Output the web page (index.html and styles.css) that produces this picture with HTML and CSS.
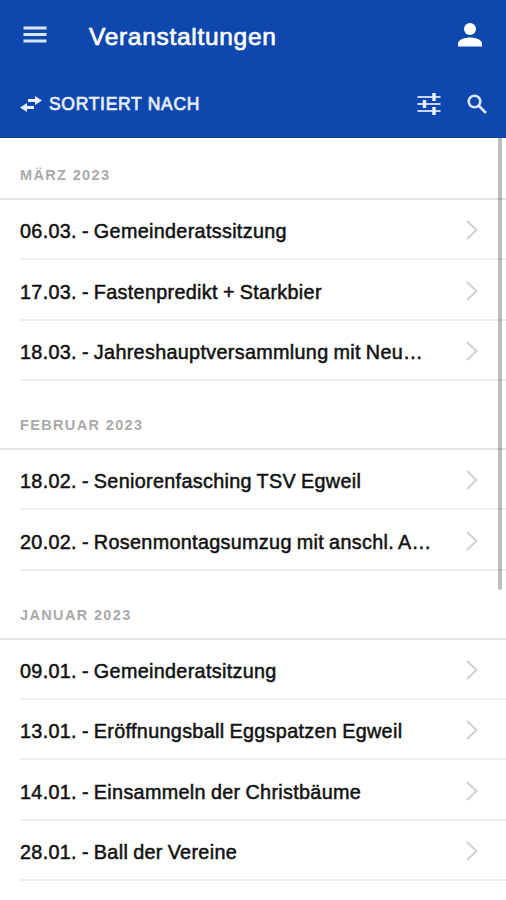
FILE: index.html
```html
<!DOCTYPE html>
<html lang="de">
<head>
    <meta charset="UTF-8">
    <meta name="viewport" content="width=device-width, initial-scale=1.0">
    <title>Veranstaltungen</title>
    <link rel="stylesheet" href="styles.css">
</head>
<body>
    <!-- Header -->
    <header>
        <div class="titlebar">
            <svg class="menu-icon" viewBox="0 0 24 18"><path d="M0.500 2h23M0.500 8.500h23M0.500 15h23"/></svg>
            <h1>Veranstaltungen</h1>
            <svg class="user-icon" viewBox="0 0 24 24"><circle cx="12" cy="6" r="6"/><path d="M0 23.500v-3c0-4 7-6 12-6s12 2 12 6v3z"/></svg>
        </div>
        <div class="toolbar">
            <svg class="swap-icon" viewBox="0 0 22 16"><path d="M8 3h7V0l7 4.500L15 9V6H8zM14 10H7V7L0 11.500 7 16v-3h7z"/></svg>
            <span class="sort-label">SORTIERT NACH</span>
            <svg class="filter-icon" viewBox="0 0 24 22"><path class="track" d="M0.500 4h23M0.500 11h23M0.500 18h23"/><path class="knob" d="M17 0v8M7.500 7v8M17 14v8"/></svg>
            <svg class="search-icon" viewBox="0 0 20 20"><circle cx="7.500" cy="7.500" r="5.800"/><path d="M11.500 11.500l7.500 7.500"/></svg>
        </div>
    </header>

    <!-- Events -->
    <main>
        <section>
            <h2>MÄRZ 2023</h2>
            <ul>
                <li><span>06.03. - Gemeinderatssitzung</span><svg viewBox="0 0 12 20"><path d="M1 1l9.500 9L1 19"/></svg></li>
                <li><span>17.03. - Fastenpredikt + Starkbier</span><svg viewBox="0 0 12 20"><path d="M1 1l9.500 9L1 19"/></svg></li>
                <li><span>18.03. - Jahreshauptversammlung mit Neu…</span><svg viewBox="0 0 12 20"><path d="M1 1l9.500 9L1 19"/></svg></li>
            </ul>
        </section>
        <section>
            <h2>FEBRUAR 2023</h2>
            <ul>
                <li><span>18.02. - Seniorenfasching TSV Egweil</span><svg viewBox="0 0 12 20"><path d="M1 1l9.500 9L1 19"/></svg></li>
                <li><span>20.02. - Rosenmontagsumzug mit anschl. A…</span><svg viewBox="0 0 12 20"><path d="M1 1l9.500 9L1 19"/></svg></li>
            </ul>
        </section>
        <section>
            <h2>JANUAR 2023</h2>
            <ul>
                <li><span>09.01. - Gemeinderatsitzung</span><svg viewBox="0 0 12 20"><path d="M1 1l9.500 9L1 19"/></svg></li>
                <li><span>13.01. - Eröffnungsball Eggspatzen Egweil</span><svg viewBox="0 0 12 20"><path d="M1 1l9.500 9L1 19"/></svg></li>
                <li><span>14.01. - Einsammeln der Christbäume</span><svg viewBox="0 0 12 20"><path d="M1 1l9.500 9L1 19"/></svg></li>
                <li><span>28.01. - Ball der Vereine</span><svg viewBox="0 0 12 20"><path d="M1 1l9.500 9L1 19"/></svg></li>
            </ul>
        </section>
        <div class="scrollbar"></div>
    </main>
</body>
</html>
```
FILE: styles.css
```css
* {
    box-sizing: border-box;
}

body {
    margin: 0;
    height: 900px;
    overflow: hidden;
    background: #fff;
    color: #111;
    font-family: "Liberation Sans", Arial, sans-serif;
}

/* Header */
header {
    height: 138px;
    background: #0e47ad;
    border-bottom: 1px solid #0a3c9e;
    color: #fff;
}

.titlebar {
    display: flex;
    align-items: center;
    height: 70px;
    padding: 0 24px 0 23px;
}

.menu-icon {
    width: 24px;
    height: 18px;
    stroke: #dbe6fb;
    stroke-width: 2.8;
}

h1 {
    flex: 1;
    margin: 3px 0 0 42px;
    font-size: 24.5px;
    font-weight: normal;
    letter-spacing: 0.7px;
    -webkit-text-stroke: 0.7px #fff;
}

.user-icon {
    width: 24px;
    height: 24px;
    fill: #fff;
}

.toolbar {
    display: flex;
    align-items: center;
    height: 68px;
    padding: 0 19px 0 20px;
}

.swap-icon {
    width: 22px;
    height: 16px;
    fill: #e6eeff;
}

.sort-label {
    flex: 1;
    margin-left: 7px;
    color: #e6eeff;
    font-size: 17.5px;
    letter-spacing: 0.7px;
    -webkit-text-stroke: 0.7px #e6eeff;
}

.filter-icon {
    width: 24px;
    height: 22px;
    margin-right: 26px;
}

.filter-icon .track {
    stroke: #c4d5f6;
    stroke-width: 2;
}

.filter-icon .knob {
    stroke: #eef3ff;
    stroke-width: 3.4;
}

.search-icon {
    width: 20px;
    height: 20px;
    fill: none;
    stroke: #dbe6fb;
    stroke-width: 2.6;
}

/* Event list */
main {
    position: relative;
}

h2 {
    display: flex;
    align-items: flex-end;
    height: 69px;
    margin: 0;
    padding: 0 20px 14px;
    border-bottom: 2px solid #e2e2e2;
    color: #aaa;
    font-size: 14.5px;
    line-height: 17px;
    letter-spacing: 1.35px;
}

section:first-child h2 {
    height: 62px;
}

ul {
    margin: 0;
    padding: 0 0 0 20px;
    list-style: none;
}

li {
    display: flex;
    align-items: center;
    justify-content: space-between;
    height: 60.35px;
    padding-right: 28px;
    border-bottom: 2px solid #ededed;
    font-size: 19.8px;
    letter-spacing: 0.32px;
    word-spacing: -0.8px;
    white-space: nowrap;
    -webkit-text-stroke: 0.5px #111;
}

li span {
    padding-top: 5px;
}

li svg {
    width: 12px;
    height: 20px;
    margin-top: 2px;
    fill: none;
    stroke: #d2d2d2;
    stroke-width: 2.2;
}

.scrollbar {
    position: absolute;
    top: 0;
    right: 4px;
    width: 4px;
    height: 452px;
    border-radius: 0 0 2px 2px;
    background: rgba(0, 0, 0, 0.26);
}
```
